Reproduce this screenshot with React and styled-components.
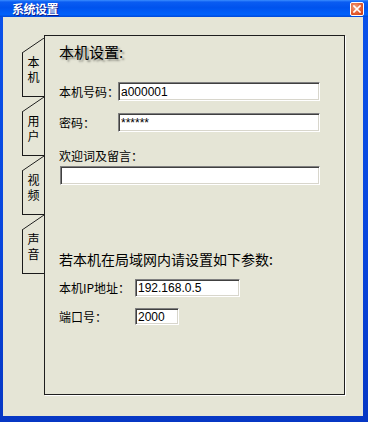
import React from "react";
import styled, { createGlobalStyle } from "styled-components";

const GlobalStyle = createGlobalStyle`
  html, body {
    margin: 0;
    padding: 0;
    background: #e5e5d6;
  }
  body {
    font-family: "Noto Sans CJK SC", "Liberation Sans", sans-serif;
    color: #000;
  }
`;

const Window = styled.div`
  width: 368px;
  height: 422px;
  display: flex;
  flex-direction: column;
  background: linear-gradient(to bottom, #0a52ea, #0845dc 60%, #0637c4);
  box-sizing: border-box;
  overflow: hidden;
`;

const TitleBar = styled.div`
  height: 17px;
  flex: none;
  display: flex;
  align-items: center;
  justify-content: space-between;
  padding: 0 4px 0 12px;
  background: linear-gradient(
    180deg,
    #3a8dff 0%,
    #0a5cf2 12%,
    #0053ee 45%,
    #0061fb 85%,
    #0049d8 100%
  );
`;

const TitleText = styled.span`
  color: #fff;
  font-size: 12px;
  font-weight: bold;
  line-height: 17px;
  letter-spacing: -0.5px;
  text-shadow: 1px 1px 0 #0a1a8a;
`;

const CloseButton = styled.div`
  width: 12px;
  height: 12px;
  border: 1px solid #fff;
  border-radius: 2px;
  background: radial-gradient(circle at 35% 35%, #f2a27e, #e2582c 60%, #c23a14);
  display: flex;
  align-items: center;
  justify-content: center;
`;

const Frame = styled.div`
  flex: 1;
  display: flex;
  margin: 0 5px 6px 3px;
  padding: 18px 18px 21px 19px;
  background: #e5e5d6;
`;

const TabStrip = styled.div`
  width: 22px;
  flex: none;
  display: flex;
  flex-direction: column;
  padding-top: 3px;
`;

const Tab = styled.div`
  height: 59px;
  display: flex;
  flex-direction: column;
`;

const TabCorner = styled.div`
  height: 15px;
  flex: none;
  background: linear-gradient(
    to bottom right,
    transparent calc(50% - 0.8px),
    #1a1a1a 50%,
    transparent calc(50% + 0.8px)
  );
`;

const TabFace = styled.div`
  flex: 1;
  border-left: 1px solid #1a1a1a;
  border-bottom: 1px solid #1a1a1a;
  display: flex;
  justify-content: center;
  padding-top: 3px;
`;

const TabText = styled.span`
  writing-mode: vertical-rl;
  text-orientation: upright;
  font-size: 12px;
  line-height: 21px;
  letter-spacing: 3px;
`;

const Panel = styled.div`
  flex: 1;
  border: 1px solid #1e1e1e;
  box-shadow: 1px 1px 0 #fff;
  display: flex;
  flex-direction: column;
  padding-left: 14px;
`;

const Heading = styled.div`
  margin-top: ${(p) => p.$top}px;
  font-size: ${(p) => p.$size}px;
  line-height: 16px;
  white-space: nowrap;
  text-shadow: ${(p) => (p.$shadow ? "2px 2px 2px #8a8a80" : "none")};
`;

const Row = styled.div`
  display: flex;
  align-items: center;
  margin-top: ${(p) => p.$top}px;
`;

const Label = styled.span`
  width: ${(p) => (p.$width ? `${p.$width}px` : "auto")};
  flex: none;
  font-size: 12px;
  line-height: 14px;
  white-space: nowrap;
  margin-top: ${(p) => p.$top || 0}px;
`;

const Field = styled.input`
  box-sizing: border-box;
  width: ${(p) => p.$width}px;
  height: ${(p) => p.$height || 19}px;
  margin: ${(p) => p.$top || 0}px 0 0 ${(p) => p.$left || 0}px;
  padding: 0 0 0 2px;
  border-style: solid;
  border-width: 1px;
  border-color: #7f7f7f #fff #fff #7f7f7f;
  box-shadow: inset 1px 1px 0 #404040, inset -1px -1px 0 #d8d6cc;
  background: #fff;
  font-family: "Liberation Sans", Arial, sans-serif;
  font-size: 12px;
  color: #000;
  outline: none;
`;

const tabs = ["本机", "用户", "视频", "声音"];

export default function App() {
  return (
    <>
      <GlobalStyle />
      <Window>
        <TitleBar>
          <TitleText>系统设置</TitleText>
          <CloseButton>
            <svg width="8" height="8" viewBox="0 0 8 8">
              <path
                d="M1 1 L7 7 M7 1 L1 7"
                stroke="#fff"
                strokeWidth="1.6"
                strokeLinecap="square"
              />
            </svg>
          </CloseButton>
        </TitleBar>
        <Frame>
          <TabStrip>
            {tabs.map((t) => (
              <Tab key={t}>
                <TabCorner />
                <TabFace>
                  <TabText>{t}</TabText>
                </TabFace>
              </Tab>
            ))}
          </TabStrip>
          <Panel>
            <Heading $top={8} $size={15} $shadow>
              本机设置:
            </Heading>
            <Row $top={22}>
              <Label $width={59}>本机号码：</Label>
              <Field $width={202} defaultValue="a000001" readOnly />
            </Row>
            <Row $top={12}>
              <Label $width={59}>密码：</Label>
              <Field $width={202} defaultValue="******" readOnly />
            </Row>
            <Label $top={17}>欢迎词及留言：</Label>
            <Field $width={260} $left={1} $top={3} readOnly />
            <Heading $top={66} $size={14}>
              若本机在局域网内请设置如下参数:
            </Heading>
            <Row $top={12}>
              <Label $width={76}>本机IP地址：</Label>
              <Field $width={105} $height={18} defaultValue="192.168.0.5" readOnly />
            </Row>
            <Row $top={11}>
              <Label $width={76}>端口号：</Label>
              <Field $width={44} $height={17} defaultValue="2000" readOnly />
            </Row>
          </Panel>
        </Frame>
      </Window>
    </>
  );
}
